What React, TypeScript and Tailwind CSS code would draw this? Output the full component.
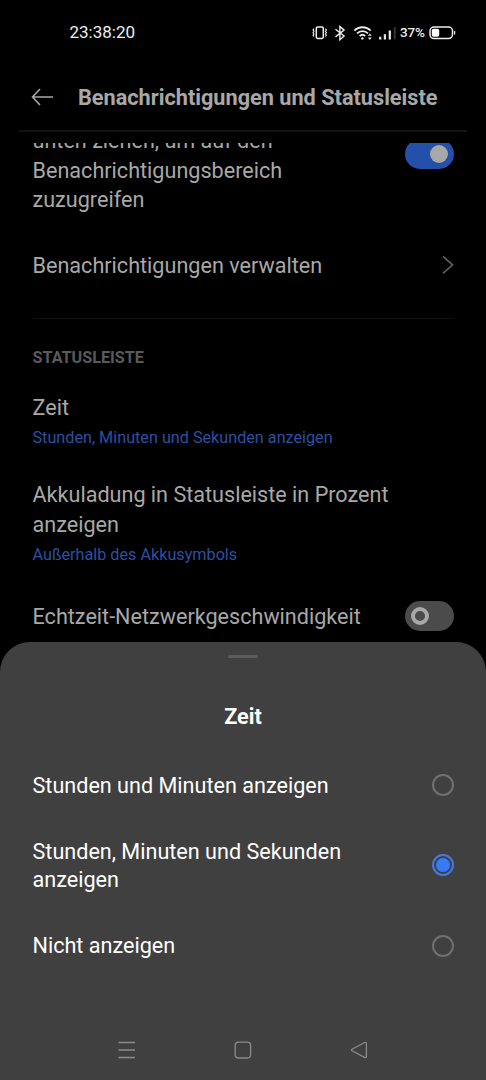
import { useState } from 'react';
import clsx from 'clsx';

const options = [
  'Stunden und Minuten anzeigen',
  'Stunden, Minuten und Sekunden anzeigen',
  'Nicht anzeigen',
];

function StatusIcons() {
  return (
    <svg width="146" height="20" viewBox="312 22 146 20" fill="none" stroke="#eee">
      {/* vibrate */}
      <rect x="316.3" y="26" width="7" height="11.4" rx="1.3" strokeWidth="1.5" />
      <path
        d="M314 27.7l-1 1.3 1 1.3-1 1.3 1 1.3-1 1.3 1 1.3M325.4 27.7l1 1.3-1 1.3 1 1.3-1 1.3 1 1.3-1 1.3"
        strokeWidth="1.1"
      />
      {/* bluetooth */}
      <path d="M335.5 28.2l8.6 6.8-4.2 3.7V25.5l4.2 3.6-8.6 6.8" strokeWidth="1.4" />
      {/* wifi */}
      <path d="M354.4 29.6a11.4 11.4 0 0 1 16.2 0" strokeWidth="1.9" />
      <path d="M357 32.4a7.8 7.8 0 0 1 11 0M359.6 35a4.2 4.2 0 0 1 5.6 0" strokeWidth="1.7" />
      <circle cx="362.4" cy="37.4" r="1.2" fill="#eee" stroke="none" />
      <path d="M367.8 34.8l2-2.3 2 2.3zM367.8 36.6l2 2.3 2-2.3z" fill="#ddd" stroke="none" />
      {/* signal */}
      <path d="M380.2 38.4v-2.6M384.9 38.4v-5.2M389.8 38.4v-9" strokeWidth="2.2" />
      <path d="M394.7 38.4V26" stroke="#333" strokeWidth="2" />
      <text
        x="400"
        y="36"
        fill="#eee"
        stroke="none"
        className="font-['Roboto',sans-serif] text-[13.5px] font-medium"
        textLength="25"
      >
        37%
      </text>
      {/* battery */}
      <rect x="430" y="26" width="22.5" height="11.6" rx="4" strokeWidth="1.5" />
      <rect x="431.8" y="27.8" width="7.4" height="8" rx="1.8" fill="#fff" stroke="none" />
      <path d="M454.6 30v3.6" strokeWidth="1.2" />
    </svg>
  );
}

function Radio({ checked }: { checked: boolean }) {
  return (
    <span
      className={clsx(
        'flex size-[22px] shrink-0 items-center justify-center rounded-full border-2',
        checked ? 'border-[#4379e3]' : 'border-[#707070]',
      )}
    >
      {checked && <span className="size-3.5 rounded-full bg-[#357bff]" />}
    </span>
  );
}

export default function App() {
  const [selected, setSelected] = useState(1);

  return (
    <div className="flex h-[1080px] w-[486px] flex-col overflow-hidden bg-black font-['Roboto',sans-serif] text-[21.6px] leading-[29.5px] text-[#a8a8a8]">
      <div className="flex h-[65px] shrink-0 items-center justify-between pr-7 pl-[69.5px]">
        <span className="text-[17px] text-[#eee]">23:38:20</span>
        <StatusIcons />
      </div>

      <header className="mx-[19px] flex h-[67px] shrink-0 items-center border-b-2 border-[#141414] pl-3">
        <svg className="mb-0.5" width="23" height="18" viewBox="0 0 23 18" fill="none" stroke="#a8a8a8" strokeWidth="1.6">
          <path d="M9 1L1.5 9 9 17M1.5 9H22" />
        </svg>
        <h1 className="ml-6 text-[21.7px] font-bold whitespace-nowrap">Benachrichtigungen und Statusleiste</h1>
      </header>

      <main className="mt-[11px] h-[499px] shrink-0 overflow-hidden pr-8 pl-[32.5px]">
        <div className="-mt-[17px] flex items-start justify-between">
          <p className="w-[270px]">
            unten ziehen, um auf den Benachrichtigungsbereich zuzugreifen
          </p>
          <span className="mt-[13px] flex h-[30px] w-[49px] items-center justify-end rounded-full bg-[#2350a8] pr-1.5">
            <span className="size-[18px] rounded-full bg-[#a8a8a8]" />
          </span>
        </div>

        <div className="mt-9 flex items-center justify-between">
          <span>Benachrichtigungen verwalten</span>
          <svg width="12" height="20" viewBox="0 0 12 20" fill="none" stroke="#606060" strokeWidth="1.6">
            <path d="M1 1.3L10.5 9.8 1 18.3" />
          </svg>
        </div>

        <div className="mt-[38px] h-px bg-[#111]" />
        <h2 className="mt-6 text-[16.2px] font-bold text-[#5a5a5a]">STATUSLEISTE</h2>

        <div className="mt-5">
          <p>Zeit</p>
          <p className="mt-[0.5px] text-[16.2px] text-[#2b50a0]">Stunden, Minuten und Sekunden anzeigen</p>
        </div>

        <div className="mt-7">
          <p>Akkuladung in Statusleiste in Prozent anzeigen</p>
          <p className="mt-[0.5px] text-[16.2px] text-[#2b50a0]">Außerhalb des Akkusymbols</p>
        </div>

        <div className="mt-8 flex items-center justify-between">
          <span className="pt-px">Echtzeit-Netzwerkgeschwindigkeit</span>
          <span className="flex h-[30px] w-[49px] items-center rounded-full bg-[#4b4b4b] pl-1.5">
            <span className="size-[18px] rounded-full border-4 border-[#a8a8a8]" />
          </span>
        </div>
      </main>

      <section className="flex flex-1 flex-col rounded-t-[30px] bg-[#404040] text-white">
        <div className="mx-auto mt-[13px] h-[3px] w-[30px] rounded-full bg-[#5c5c5c]" />
        <h2 className="mt-11 text-center font-bold">Zeit</h2>

        <div className="mt-[38.5px] flex flex-col gap-9 pr-8 pl-[32.5px] leading-[28.5px]">
          {options.map((label, i) => (
            <button
              key={label}
              onClick={() => setSelected(i)}
              className="flex w-full items-center justify-between text-left"
            >
              <span className="w-[340px] pt-[1.5px]">{label}</span>
              <Radio checked={selected === i} />
            </button>
          ))}
        </div>

        <nav className="mt-auto flex h-[60px] items-center justify-between px-[118px]">
          <svg width="18" height="18" viewBox="0 0 18 18" stroke="#8a8a8a" strokeWidth="1.5">
            <path d="M.5 1.5h16.5M.5 9h16.5M.5 16.5h16.5" />
          </svg>
          <svg width="18" height="18" viewBox="0 0 18 18" fill="none" stroke="#8a8a8a" strokeWidth="1.3">
            <rect x="1.2" y="1.2" width="15.4" height="15.8" rx="3.2" />
          </svg>
          <svg width="18" height="18" viewBox="0 0 18 18" fill="none" stroke="#8a8a8a" strokeWidth="1.3">
            <path d="M2 8.2L14.6 1.5Q16.4 .8 16.4 2.8V15.2Q16.4 17.2 14.6 16.4L2 9.8Q.8 9 2 8.2z" />
          </svg>
        </nav>
      </section>
    </div>
  );
}
